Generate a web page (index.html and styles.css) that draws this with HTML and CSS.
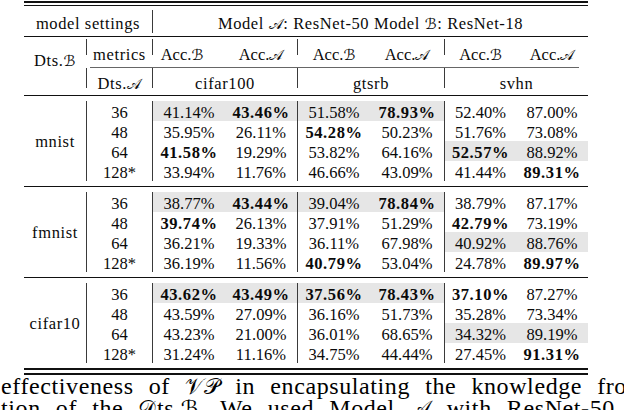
FILE: index.html
```html
<!DOCTYPE html>
<html lang="en">
<head>
<meta charset="utf-8">
<title>Table</title>
<link rel="stylesheet" href="styles.css">
</head>
<body>
<div class="tbl">
  <div class="rule top1"></div>
  <div class="rule top2"></div>
  <div class="hrow1">
    <div class="h1c txt">model settings</div>
    <div class="h1c txt vl">Model <span class="cal">𝒜</span>: ResNet-50 Model <span class="cal">ℬ</span>: ResNet-18</div>
  </div>
  <div class="rule mid"></div>
  <div class="hgrid">
    <div class="dtsb txt">Dts.<span class="cal">ℬ</span></div>
    <div class="hc txt r2 vl">metrics</div>
    <div class="hc r2 vl shift">Acc.<span class="cal">ℬ</span></div>
    <div class="hc r2">Acc.<span class="cal">𝒜</span></div>
    <div class="hc r2 vl">Acc.<span class="cal">ℬ</span></div>
    <div class="hc r2">Acc.<span class="cal">𝒜</span></div>
    <div class="hc r2 vl">Acc.<span class="cal">ℬ</span></div>
    <div class="hc r2">Acc.<span class="cal">𝒜</span></div>
    <div class="cmid"></div>
    <div class="hc txt r3 vl">Dts.<span class="cal">𝒜</span></div>
    <div class="hc txt r3 vl span2">cifar100</div>
    <div class="hc txt r3 vl span2">gtsrb</div>
    <div class="hc txt r3 vl span2">svhn</div>
  </div>
  <div class="rule mid"></div>

  <div class="grp">
    <div class="name txt">mnist</div>
    <div class="c vl">36</div>
    <div class="c vl sh">41.14%</div><div class="c sh b">43.46%</div>
    <div class="c vl sh">51.58%</div><div class="c sh b">78.93%</div>
    <div class="c vl">52.40%</div><div class="c">87.00%</div>
    <div class="c vl">48</div>
    <div class="c vl">35.95%</div><div class="c">26.11%</div>
    <div class="c vl b">54.28%</div><div class="c">50.23%</div>
    <div class="c vl">51.76%</div><div class="c">73.08%</div>
    <div class="c vl">64</div>
    <div class="c vl b">41.58%</div><div class="c">19.29%</div>
    <div class="c vl">53.82%</div><div class="c">64.16%</div>
    <div class="c vl sh b">52.57%</div><div class="c sh">88.92%</div>
    <div class="c vl">128*</div>
    <div class="c vl">33.94%</div><div class="c">11.76%</div>
    <div class="c vl">46.66%</div><div class="c">43.09%</div>
    <div class="c vl">41.44%</div><div class="c b">89.31%</div>
  </div>
  <div class="rule mid"></div>

  <div class="grp">
    <div class="name txt">fmnist</div>
    <div class="c vl">36</div>
    <div class="c vl sh">38.77%</div><div class="c sh b">43.44%</div>
    <div class="c vl sh">39.04%</div><div class="c sh b">78.84%</div>
    <div class="c vl">38.79%</div><div class="c">87.17%</div>
    <div class="c vl">48</div>
    <div class="c vl b">39.74%</div><div class="c">26.13%</div>
    <div class="c vl">37.91%</div><div class="c">51.29%</div>
    <div class="c vl b">42.79%</div><div class="c">73.19%</div>
    <div class="c vl">64</div>
    <div class="c vl">36.21%</div><div class="c">19.33%</div>
    <div class="c vl">36.11%</div><div class="c">67.98%</div>
    <div class="c vl sh">40.92%</div><div class="c sh">88.76%</div>
    <div class="c vl">128*</div>
    <div class="c vl">36.19%</div><div class="c">11.56%</div>
    <div class="c vl b">40.79%</div><div class="c">53.04%</div>
    <div class="c vl">24.78%</div><div class="c b">89.97%</div>
  </div>
  <div class="rule mid"></div>

  <div class="grp">
    <div class="name txt">cifar10</div>
    <div class="c vl">36</div>
    <div class="c vl sh b">43.62%</div><div class="c sh b">43.49%</div>
    <div class="c vl sh b">37.56%</div><div class="c sh b">78.43%</div>
    <div class="c vl b">37.10%</div><div class="c">87.27%</div>
    <div class="c vl">48</div>
    <div class="c vl">43.59%</div><div class="c">27.09%</div>
    <div class="c vl">36.16%</div><div class="c">51.73%</div>
    <div class="c vl">35.28%</div><div class="c">73.34%</div>
    <div class="c vl">64</div>
    <div class="c vl">43.23%</div><div class="c">21.00%</div>
    <div class="c vl">36.01%</div><div class="c">68.65%</div>
    <div class="c vl sh">34.32%</div><div class="c sh">89.19%</div>
    <div class="c vl">128*</div>
    <div class="c vl">31.24%</div><div class="c">11.16%</div>
    <div class="c vl">34.75%</div><div class="c">44.44%</div>
    <div class="c vl">27.45%</div><div class="c b">91.31%</div>
  </div>
  <div class="rule bot1"></div>
  <div class="rule bot2"></div>
</div>
<p class="caption">effectiveness of <span class="cal">𝒱𝒫</span> in encapsulating the knowledge from<br>tion of the <span class="cal">𝒟</span>ts.<span class="cal">ℬ</span>. We used Model <span class="cal">𝒜</span> with ResNet-50 and</p>
</body>
</html>
```

FILE: styles.css
```css
html, body {
  margin: 0;
  padding: 0;
  background: #fff;
}
body {
  width: 624px;
  height: 410px;
  overflow: hidden;
  font-family: "Liberation Serif", "DejaVu Serif", serif;
  font-size: 16.5px;
  color: #0a0a0a;
}
.cal {
  font-family: "DejaVu Serif", "DejaVu Sans", serif;
  font-size: 0.92em;
  line-height: 0;
}
.txt {
  letter-spacing: 0.6px;
}
.tbl {
  margin-left: 24px;
  width: 564px;
}
.rule {
  background: #111;
}
.top1 { margin-top: 1px; height: 2px; }
.top2 { margin-top: 2px; height: 1px; }
.mid { height: 1px; }
.bot1 { height: 2px; }
.bot2 { margin-top: 3px; height: 2px; }

.vl {
  border-left: 1px solid #3a3a3a;
}

.hrow1 {
  display: grid;
  grid-template-columns: 128px 436px;
  height: 30px;
}
.h1c {
  box-sizing: border-box;
  margin-top: 4px;
  height: 23px;
  padding-top: 4px;
  line-height: 20px;
  text-align: center;
  white-space: nowrap;
}

.hgrid {
  display: grid;
  grid-template-columns: 62px 66px 73px 72px 73px 74px 72px 72px;
  grid-template-rows: 30px 1px 27px;
}
.dtsb {
  grid-column: 1;
  grid-row: 1 / 4;
  padding-top: 14px;
  line-height: 20px;
  text-align: center;
}
.hc {
  box-sizing: border-box;
  line-height: 20px;
  text-align: center;
  white-space: nowrap;
}
.r2 {
  grid-row: 1;
  margin-top: 2px;
  height: 16px;
  padding-top: 6px;
}
.shift {
  padding-right: 14px;
}
.cmid {
  grid-column: 2 / -1;
  grid-row: 2;
  margin: 0 9px 0 4px;
  background: #666;
}
.r3 {
  grid-row: 3;
  height: 20px;
  padding-top: 6px;
}
.span2 {
  grid-column: span 2;
}

.grp {
  display: grid;
  grid-template-columns: 62px 66px 73px 72px 73px 74px 72px 72px;
  grid-auto-rows: 20px;
  padding: 5px 0;
}
.name {
  grid-column: 1;
  grid-row: 1 / span 4;
  display: flex;
  align-items: center;
  justify-content: center;
  padding-top: 2px;
}
.c {
  box-sizing: border-box;
  padding-top: 2px;
  line-height: 20px;
  text-align: center;
  white-space: nowrap;
}
.sh {
  background: #e6e6e6;
}
.b {
  font-weight: bold;
  letter-spacing: 0.6px;
}

.caption {
  margin: 0;
  width: 624px;
  box-sizing: border-box;
  overflow: hidden;
  padding-left: 1px;
  font-size: 24px;
  line-height: 22px;
  letter-spacing: 0.6px;
  word-spacing: 8.5px;
  color: #000;
  white-space: nowrap;
}
```
